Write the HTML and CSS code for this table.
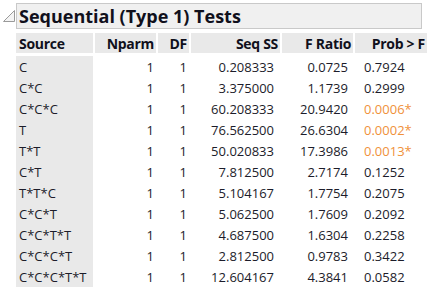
FILE: index.html
```html
<!doctype html>
<html>
<head>
    <title>Sequential (Type 1) Tests</title>
    <link rel="stylesheet" href="styles.css">
</head>
<body>
    <div class="report">
        <div class="outline-head">
            <svg class="toggle" width="14" height="14" viewBox="0 0 14 14">
                <path d="M12.5 1.5 L12.5 12.5 L1.5 12.5 Z" fill="#f4f4f4" stroke="#9a9a9a" stroke-width="1"/>
            </svg>
            <div class="outline-title">Sequential (Type 1) Tests</div>
        </div>
        <table class="tests">
            <thead>
                <tr>
                    <th class="src">Source</th>
                    <th class="c-nparm">Nparm</th>
                    <th class="c-df">DF</th>
                    <th class="c-ss">Seq SS</th>
                    <th class="c-f">F Ratio</th>
                    <th class="c-p">Prob &gt; F</th>
                </tr>
            </thead>
            <tbody>
                <tr><td class="src">C</td><td>1</td><td>1</td><td>0.208333</td><td>0.0725</td><td class="pv">0.7924</td></tr>
                <tr><td class="src">C*C</td><td>1</td><td>1</td><td>3.375000</td><td>1.1739</td><td class="pv">0.2999</td></tr>
                <tr><td class="src">C*C*C</td><td>1</td><td>1</td><td>60.208333</td><td>20.9420</td><td class="pv sig">0.0006*</td></tr>
                <tr><td class="src">T</td><td>1</td><td>1</td><td>76.562500</td><td>26.6304</td><td class="pv sig">0.0002*</td></tr>
                <tr><td class="src">T*T</td><td>1</td><td>1</td><td>50.020833</td><td>17.3986</td><td class="pv sig">0.0013*</td></tr>
                <tr><td class="src">C*T</td><td>1</td><td>1</td><td>7.812500</td><td>2.7174</td><td class="pv">0.1252</td></tr>
                <tr><td class="src">T*T*C</td><td>1</td><td>1</td><td>5.104167</td><td>1.7754</td><td class="pv">0.2075</td></tr>
                <tr><td class="src">C*C*T</td><td>1</td><td>1</td><td>5.062500</td><td>1.7609</td><td class="pv">0.2092</td></tr>
                <tr><td class="src">C*C*T*T</td><td>1</td><td>1</td><td>4.687500</td><td>1.6304</td><td class="pv">0.2258</td></tr>
                <tr><td class="src">C*C*C*T</td><td>1</td><td>1</td><td>2.812500</td><td>0.9783</td><td class="pv">0.3422</td></tr>
                <tr><td class="src">C*C*C*T*T</td><td>1</td><td>1</td><td>12.604167</td><td>4.3841</td><td class="pv">0.0582</td></tr>
            </tbody>
        </table>
    </div>
</body>
</html>
```

FILE: styles.css
```css
body {
    margin: 0;
    background-color: #ffffff;
    color: #1c1c2a;
    font-family: 'Open Sans', 'Noto Sans', sans-serif;
}
.report {
    padding: 3px 0 0 2px;
}
.outline-head {
    display: flex;
    align-items: center;
}
.toggle {
    display: block;
    width: 14px;
    height: 14px;
}
.outline-title {
    width: 402px;
    height: 24px;
    line-height: 24px;
    padding-left: 2px;
    background-color: #f0f0f0;
    border: 1px solid #c9c9c9;
    font-weight: bold;
    font-size: 18px;
    color: #10101c;
}
.tests {
    margin: 4px 0 0 14px;
    border-collapse: separate;
    border-spacing: 0;
    font-size: 13px;
}
.tests th {
    height: 20px;
    padding: 0 2px;
    background-color: #e9e9e9;
    font-size: 14px;
    font-weight: bold;
    letter-spacing: -0.3px;
    text-align: right;
    border-right: 2px solid #ffffff;
    border-bottom: 3px solid #ffffff;
    color: #10101c;
}
.tests th:last-child {
    border-right: none;
}
.tests td {
    height: 21px;
    padding: 0 2px;
    text-align: right;
    border-right: 2px solid #ffffff;
}
.tests .src {
    text-align: left;
    width: 72px;
    padding-left: 3px;
    background-color: #e9e9e9;
}
.c-nparm { width: 57px; }
.c-df { width: 27px; }
.c-ss { width: 85px; }
.c-f { width: 67px; }
.c-p { width: 68px; }
.tests td:nth-child(4) { padding-right: 6px; }
.tests td:nth-child(5) { padding-right: 5px; }
.tests td.pv {
    text-align: left;
    padding-left: 9px;
}
.tests td.sig {
    color: #f0913a;
}
```
